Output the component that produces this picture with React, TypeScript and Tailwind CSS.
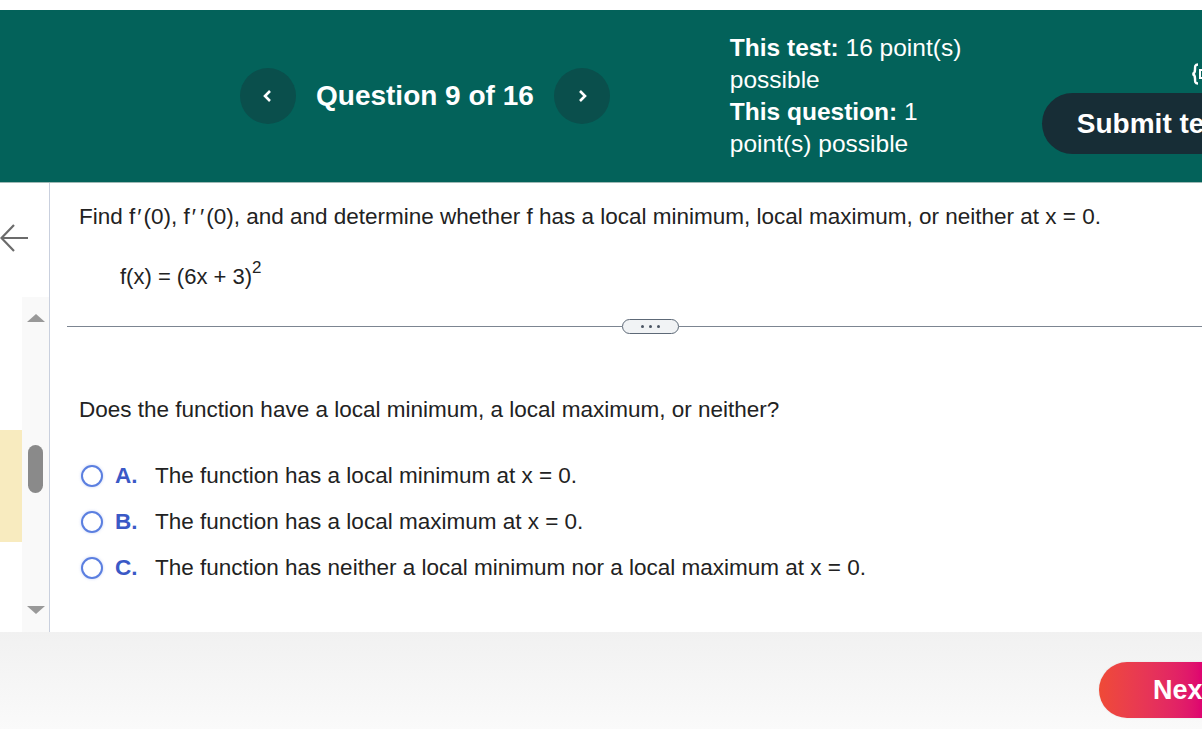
import React from "react";

const font = { fontFamily: '"Liberation Sans", Arial, sans-serif' };

function Radio({ letter, text }: { letter: string; text: string }) {
  return (
    <div className="flex items-center h-[46px]">
      <span className="w-[22px] h-[22px] rounded-full border-2 border-[#5b7fe0] bg-white shadow-[0_0_3px_rgba(91,127,224,0.35)] ml-[2px] shrink-0" />
      <span className="ml-[12px] w-[40px] text-[22.5px] font-bold text-[#3a59c6]">{letter}</span>
      <span className="text-[22.5px] text-[#222] whitespace-nowrap">{text}</span>
    </div>
  );
}

function P() {
  return <span className="px-[2px]">′</span>;
}

export default function App() {
  return (
    <div className="w-[1202px] h-[729px] overflow-hidden bg-white flex flex-col" style={font}>
      <div className="h-[10px] bg-white shrink-0" />
      <header className="h-[173px] shrink-0 bg-[#03625a] flex items-center border-b border-[#9fb9b5] relative overflow-hidden">
        <div className="ml-[240px] flex items-center shrink-0">
          <button className="w-[56px] h-[56px] shrink-0 rounded-full bg-[#0a4f4c] flex items-center justify-center text-white">
            <svg width="12" height="16" viewBox="0 0 12 16"><path d="M8 3 L3 8 L8 13" stroke="white" strokeWidth="2.6" fill="none" /></svg>
          </button>
          <span className="ml-[20px] mr-[20px] text-white font-bold text-[28px] whitespace-nowrap">Question 9 of 16</span>
          <button className="w-[56px] h-[56px] shrink-0 rounded-full bg-[#0a4f4c] flex items-center justify-center text-white">
            <svg width="12" height="16" viewBox="0 0 12 16"><path d="M4 3 L9 8 L4 13" stroke="white" strokeWidth="2.6" fill="none" /></svg>
          </button>
        </div>
        <div className="ml-[120px] w-[250px] shrink-0 text-white text-[24.5px] leading-[32px]">
          <div><span className="font-bold">This test:</span> 16 point(s) possible</div>
          <div><span className="font-bold">This question:</span> 1 point(s) possible</div>
        </div>
        <div className="ml-[62px] self-stretch flex flex-col pt-[83px] shrink-0">
          <button className="h-[61px] w-[220px] rounded-l-full bg-[#172d36] text-white font-bold text-[28px] text-left pl-[35px] whitespace-nowrap">
            Submit test
          </button>
        </div>
        <svg className="absolute left-[1191px] top-[53px]" width="14" height="22" viewBox="0 0 14 22">
          <path d="M7 1.5 C4 1.5 4 3 4 6.5 C4 9.5 3.5 10.5 1.5 11 C3.5 11.5 4 12.5 4 15.5 C4 19 4 20.5 7 20.5" stroke="white" strokeWidth="2.4" fill="none" />
          <rect x="9" y="7" width="6" height="8" stroke="white" strokeWidth="2" fill="none" />
        </svg>
      </header>

      <div className="flex h-[449px] shrink-0">
        <div className="w-[50px] border-r border-[#c9d0de] flex shrink-0">
          <div className="w-[22px] flex flex-col overflow-visible">
            <div className="h-[38px] pt-[38px]">
              <svg width="30" height="34" viewBox="0 0 30 34" className="-ml-[1px]">
                <path d="M29 17 H3 M15 4 L2.5 17 L15 30" stroke="#6b6b6b" strokeWidth="2.2" fill="none" />
              </svg>
            </div>
            <div className="h-[209px]" />
            <div className="h-[112px] bg-[#f8ebbf]" />
          </div>
          <div className="w-[27px] flex flex-col">
            <div className="h-[114px]" />
            <div className="flex-1 bg-[#f9f9f9] flex flex-col items-center">
              <div className="mt-[17px] w-0 h-0 border-l-[9px] border-r-[9px] border-b-[8px] border-l-transparent border-r-transparent border-b-[#999]" />
              <div className="mt-[123px] w-[15px] h-[48px] rounded-full bg-[#8a8a8a]" />
              <div className="mt-[113px] w-0 h-0 border-l-[9px] border-r-[9px] border-t-[8px] border-l-transparent border-r-transparent border-t-[#999]" />
            </div>
          </div>
        </div>
        <div className="flex-1 pt-[21px]">
          <div className="pl-[29px] text-[22.5px] text-[#222] leading-[26px] whitespace-nowrap">
            Find f<P />(0), f<P /><P />(0), and and determine whether f has a local minimum, local maximum, or neither at x = 0.
          </div>
          <div className="pl-[70px] mt-[34px] text-[22px] text-[#222] leading-[26px] whitespace-nowrap">
            f(x) = (6x + 3)<sup className="text-[17px] relative -top-[11px] align-baseline">2</sup>
          </div>
          <div className="mt-[29px] ml-[17px] flex items-center">
            <div className="w-[555px] h-px bg-[#7c8591]" />
            <div className="w-[57px] h-[15px] shrink-0 rounded-full border border-[#5d6977] bg-[#f1f3f5] flex items-center justify-center gap-[5px]">
              <span className="w-[3px] h-[3px] rounded-full bg-[#4b5563]" />
              <span className="w-[3px] h-[3px] rounded-full bg-[#4b5563]" />
              <span className="w-[3px] h-[3px] rounded-full bg-[#4b5563]" />
            </div>
            <div className="flex-1 h-px bg-[#7c8591]" />
          </div>
          <div className="pl-[29px] mt-[63px] text-[22.5px] text-[#222] leading-[26px] whitespace-nowrap">
            Does the function have a local minimum, a local maximum, or neither?
          </div>
          <div className="pl-[29px] mt-[30px] flex flex-col">
            <Radio letter="A." text="The function has a local minimum at x = 0." />
            <Radio letter="B." text="The function has a local maximum at x = 0." />
            <Radio letter="C." text="The function has neither a local minimum nor a local maximum at x = 0." />
          </div>
        </div>
      </div>

      <footer className="flex-1 bg-gradient-to-b from-[#f1f1f1] to-[#fafafa] flex items-start justify-end pt-[30px] overflow-hidden">
        <button className="h-[56px] w-[103px] shrink-0 rounded-l-full bg-gradient-to-r from-[#ef4a36] to-[#de0370] text-white font-bold text-[27px] text-left pl-[54px] whitespace-nowrap overflow-hidden shadow-[0_0_2px_rgba(0,0,0,0.1)]">
          Next
        </button>
      </footer>
    </div>
  );
}
